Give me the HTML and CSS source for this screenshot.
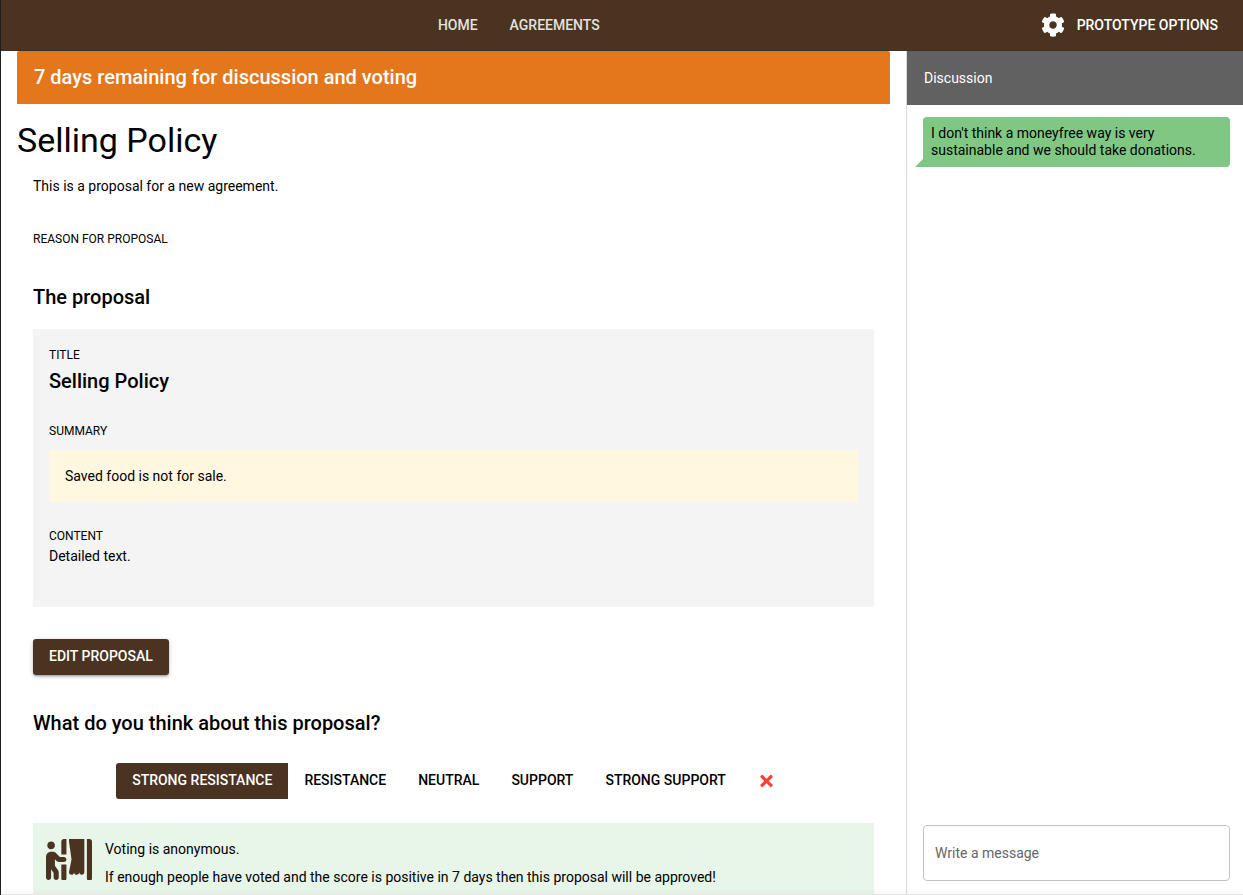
FILE: index.html
```html
<!DOCTYPE html>
<html lang="en">
<head>
<meta charset="utf-8">
<meta name="viewport" content="width=device-width, initial-scale=1">
<title>Selling Policy</title>
<link rel="stylesheet" href="styles.css">
</head>
<body class="app">
  <header class="topbar">
    <nav class="tabs" aria-label="Main">
      <a class="tab" href="#home">HOME</a>
      <a class="tab" href="#agreements">AGREEMENTS</a>
    </nav>
    <button class="options" type="button">
      <svg class="options-icon" viewBox="0 0 512 512" aria-hidden="true"><path d="M487.4 315.7l-42.6-24.6c4.3-23.2 4.3-47 0-70.2l42.6-24.6c4.9-2.8 7.1-8.6 5.5-14-11.1-35.6-30-67.8-54.7-94.6-3.8-4.1-10-5.1-14.8-2.3L380.8 110c-17.9-15.4-38.5-27.3-60.8-35.1V25.8c0-5.6-3.9-10.5-9.4-11.7-36.7-8.2-74.3-7.8-109.2 0-5.5 1.2-9.4 6.1-9.4 11.7V75c-22.2 7.9-42.8 19.8-60.8 35.1L88.7 85.5c-4.9-2.8-11-1.9-14.8 2.3-24.7 26.7-43.6 58.9-54.7 94.6-1.7 5.4.6 11.2 5.5 14L67.3 221c-4.3 23.2-4.3 47 0 70.2l-42.6 24.6c-4.9 2.8-7.1 8.6-5.5 14 11.1 35.6 30 67.8 54.7 94.6 3.8 4.1 10 5.1 14.8 2.3l42.6-24.6c17.9 15.4 38.5 27.3 60.8 35.1v49.2c0 5.6 3.9 10.5 9.4 11.7 36.7 8.2 74.3 7.8 109.2 0 5.5-1.2 9.4-6.1 9.4-11.7v-49.2c22.2-7.9 42.8-19.8 60.8-35.1l42.6 24.6c4.9 2.8 11 1.9 14.8-2.3 24.7-26.7 43.6-58.9 54.7-94.6 1.5-5.5-.7-11.3-5.6-14.1zM256 336c-44.1 0-80-35.9-80-80s35.9-80 80-80 80 35.9 80 80-35.9 80-80 80z"/></svg>
      <span>PROTOTYPE OPTIONS</span>
    </button>
  </header>

  <div class="columns">
    <main class="page">
      <div class="banner heading">7 days remaining for discussion and voting</div>
      <h1 class="title">Selling Policy</h1>
      <div class="body">
        <p class="intro">This is a proposal for a new agreement.</p>
        <div class="caption reason">REASON FOR PROPOSAL</div>
        <h2 class="heading">The proposal</h2>

        <section class="proposal">
          <div class="caption">TITLE</div>
          <h3 class="heading">Selling Policy</h3>
          <div class="caption field">SUMMARY</div>
          <p class="summary">Saved food is not for sale.</p>
          <div class="caption field">CONTENT</div>
          <p class="text">Detailed text.</p>
        </section>

        <button class="edit" type="button">EDIT PROPOSAL</button>

        <h2 class="heading">What do you think about this proposal?</h2>
        <div class="votes" role="group" aria-label="Your vote">
          <button class="vote vote-active" type="button" aria-pressed="true">STRONG RESISTANCE</button>
          <button class="vote" type="button">RESISTANCE</button>
          <button class="vote" type="button">NEUTRAL</button>
          <button class="vote" type="button">SUPPORT</button>
          <button class="vote" type="button">STRONG SUPPORT</button>
          <button class="vote vote-clear" type="button" aria-label="Clear vote">
            <svg class="clear-icon" viewBox="0 0 352 512" aria-hidden="true"><path d="M242.72 256l100.07-100.07c12.28-12.28 12.28-32.19 0-44.48l-22.24-22.24c-12.28-12.28-32.19-12.28-44.48 0L176 189.28 75.93 89.21c-12.28-12.28-32.19-12.28-44.48 0L9.21 111.45c-12.28 12.28-12.28 32.19 0 44.48L109.28 256 9.21 356.07c-12.28 12.28-12.28 32.19 0 44.48l22.24 22.24c12.28 12.28 32.2 12.28 44.48 0L176 322.72l100.07 100.07c12.28 12.28 32.2 12.28 44.48 0l22.24-22.24c12.28-12.28 12.28-32.19 0-44.48L242.72 256z"/></svg>
          </button>
        </div>

        <section class="notice">
          <svg class="booth-icon" viewBox="0 0 576 512" aria-hidden="true"><path d="M192 496c0 8.8 7.2 16 16 16h32c8.8 0 16-7.2 16-16V320h-64v176zm32-272h-50.9l-45.2-45.3C115.8 166.6 99.7 160 82.7 160H64c-17.1 0-33.2 6.7-45.3 18.8C6.7 190.9 0 206.9 0 224.1L.2 320 0 480c0 17.7 14.3 32 31.9 32 17.6 0 32-14.3 32-32l.1-100.7c.9.5 1.6 1.3 2.5 1.7l29.1 43v56c0 17.7 14.3 32 32 32s32-14.3 32-32v-56.5c0-9.9-2.3-19.8-6.7-28.6l-41.2-61.3V253l20.9 20.9c9.1 9.1 21.1 14.1 33.9 14.1H224c17.7 0 32-14.3 32-32s-14.3-32-32-32zM64 128c26.5 0 48-21.5 48-48S90.5 32 64 32 16 53.5 16 80s21.5 48 48 48zm224-96l31.5 223.1-30.9 154.6c-4.3 21.6 13 38.3 31.4 38.3 15.2 0 28-9.1 32.3-30.4.9 16.9 14.6 30.4 31.7 30.4 17.7 0 32-14.3 32-32 0 17.7 14.3 32 32 32s32-14.3 32-32V0H288v32zm-96 0v160h64V0h-32c-17.7 0-32 14.3-32 32zM544 0h-32v496c0 8.8 7.2 16 16 16h32c8.8 0 16-7.2 16-16V32c0-17.7-14.3-32-32-32z"/></svg>
          <div class="notice-text">
            <p>Voting is anonymous.</p>
            <p>If enough people have voted and the score is positive in 7 days then this proposal will be approved!</p>
          </div>
        </section>
      </div>
    </main>

    <aside class="discussion">
      <h2 class="discussion-title">Discussion</h2>
      <div class="messages">
        <div class="bubble">I don't think a moneyfree way is very sustainable and we should take donations.</div>
      </div>
      <form class="composer">
        <input class="message-input" type="text" placeholder="Write a message" aria-label="Write a message">
      </form>
    </aside>
  </div>
  <div class="bottom-edge"></div>
</body>
</html>
```

FILE: styles.css
```css
* {
  box-sizing: border-box;
}

h1, h2, h3, p {
  margin: 0;
}

button, input {
  font: inherit;
  color: inherit;
}

button {
  border: 0;
  background: none;
  cursor: pointer;
}

.app {
  display: flex;
  flex-direction: column;
  height: 100vh;
  margin: 0;
  border-left: 1px solid #1b2124;
  background: #fff;
  color: #000;
  font-family: Roboto, "Liberation Sans", sans-serif;
  font-size: 14px;
  line-height: 20px;
}

.topbar {
  display: flex;
  flex: none;
  align-items: center;
  padding: 0 25px 1px 0;
  height: 51px;
  border-bottom: 1px solid #413020;
  background: #4a3421;
  color: #fff;
}

.tabs {
  display: flex;
  flex: 1;
  justify-content: center;
}

.tab {
  padding: 0 16px;
  color: #e4e1de;
  font-weight: 500;
  text-decoration: none;
}

.options {
  display: flex;
  align-items: center;
  gap: 12px;
  padding: 0 0 0 4px;
  font-weight: 500;
}

.options-icon {
  width: 24px;
  height: 24px;
  fill: currentColor;
}

.columns {
  display: flex;
  flex: 1;
  min-height: 0;
}

.page {
  flex: 1;
  min-width: 0;
  padding: 0 16px;
  overflow-y: auto;
  scrollbar-width: none;
}

.heading {
  font-size: 20px;
  font-weight: 500;
  line-height: 32px;
}

.banner {
  padding: 10px 17px 11px;
  border-radius: 2px 2px 0 0;
  background: #e4761b;
  color: #fff;
}

.title {
  padding: 16px 0;
  font-size: 34px;
  font-weight: 400;
  line-height: 40px;
}

.body {
  padding: 0 16px 32px;
}

.caption {
  font-size: 12px;
  line-height: 19px;
}

.reason {
  margin: 34px 0 32px;
}

.proposal {
  margin: 16px 0 32px;
  padding: 17px 16px 41px;
  background: #f4f4f4;
}

.field {
  margin-top: 25px;
}

.summary {
  margin-top: 9px;
  padding: 16px;
  background: #fff7df;
}

.edit {
  display: block;
  height: 36px;
  margin-bottom: 32px;
  padding: 0 16px 2px;
  border-radius: 3px;
  background: #4a3421;
  color: #fff;
  font-weight: 500;
  box-shadow: 0 1px 5px rgba(0, 0, 0, .2), 0 2px 2px rgba(0, 0, 0, .14), 0 3px 1px -2px rgba(0, 0, 0, .12);
}

.votes {
  display: flex;
  justify-content: center;
  margin: 24px 0;
}

.vote {
  height: 36px;
  padding: 0 16px 2px;
  font-weight: 500;
}

.vote-active {
  border-radius: 3px 0 0 3px;
  background: #4a3421;
  color: #fff;
}

.vote-clear {
  display: flex;
  align-items: center;
  padding: 0 18px;
}

.clear-icon {
  width: 13px;
  height: 18px;
  fill: #f44336;
}

.notice {
  display: flex;
  gap: 13px;
  padding: 12px 13px;
  background: #e8f5e9;
}

.booth-icon {
  flex: none;
  width: 46px;
  height: 41px;
  margin-top: 4px;
  fill: #4a3421;
}

.notice-text {
  line-height: 28px;
}

.discussion {
  display: flex;
  flex: none;
  flex-direction: column;
  width: 337px;
  border-left: 1px solid #dadada;
}

.discussion-title {
  padding: 17px;
  background: #616161;
  color: #fff;
  font-size: 14px;
  font-weight: 400;
  line-height: 20px;
}

.messages {
  flex: 1;
  padding: 12px 13px 12px 16px;
}

.bubble {
  position: relative;
  padding: 8px;
  border-radius: 4px 4px 4px 0;
  background: #81c784;
  line-height: 17px;
}

.bubble::before {
  content: "";
  position: absolute;
  right: 100%;
  bottom: 0;
  border-right: 8px solid #81c784;
  border-top: 8px solid transparent;
}

.composer {
  padding: 0 13px 14px 16px;
}

.message-input {
  display: block;
  width: 100%;
  height: 56px;
  padding: 0 11px;
  border: 1px solid #c2c2c2;
  border-radius: 4px;
  background: #fff;
}

.message-input::placeholder {
  color: #666;
  opacity: 1;
}

.bottom-edge {
  position: fixed;
  right: 0;
  bottom: 0;
  left: 1px;
  height: 1px;
  background: #e4e4e4;
  box-shadow: 0 0 6px rgba(0, 0, 0, .2);
}
```
